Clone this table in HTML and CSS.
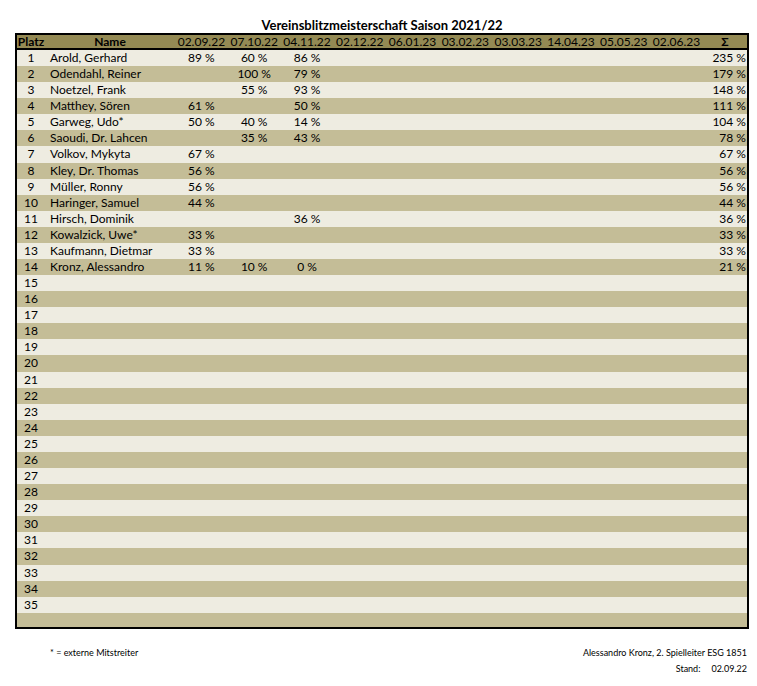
FILE: index.html
```html
<!DOCTYPE html>
<html lang="de">
<head>
<meta charset="utf-8">
<title>Vereinsblitzmeisterschaft Saison 2021/22</title>
<link rel="stylesheet" href="styles.css">
</head>
<body>
<div class="page">
  <h1 class="title">Vereinsblitzmeisterschaft Saison 2021/22</h1>
  <div class="sheet">
    <div class="row head">
      <div class="c-platz b">Platz</div>
      <div class="c-name b hc">Name</div>
      <div class="c-d">02.09.22</div>
      <div class="c-d">07.10.22</div>
      <div class="c-d">04.11.22</div>
      <div class="c-d">02.12.22</div>
      <div class="c-d">06.01.23</div>
      <div class="c-d">03.02.23</div>
      <div class="c-d">03.03.23</div>
      <div class="c-d">14.04.23</div>
      <div class="c-d">05.05.23</div>
      <div class="c-d">02.06.23</div>
      <div class="c-sum b hc">Σ</div>
    </div>
    <div class="row l"><div class="c-platz">1</div><div class="c-name">Arold, Gerhard</div><div class="c-d">89 %</div><div class="c-d">60 %</div><div class="c-d">86 %</div><div class="c-d"></div><div class="c-d"></div><div class="c-d"></div><div class="c-d"></div><div class="c-d"></div><div class="c-d"></div><div class="c-d"></div><div class="c-sum">235 %</div></div>
    <div class="row d"><div class="c-platz">2</div><div class="c-name">Odendahl, Reiner</div><div class="c-d"></div><div class="c-d">100 %</div><div class="c-d">79 %</div><div class="c-d"></div><div class="c-d"></div><div class="c-d"></div><div class="c-d"></div><div class="c-d"></div><div class="c-d"></div><div class="c-d"></div><div class="c-sum">179 %</div></div>
    <div class="row l"><div class="c-platz">3</div><div class="c-name">Noetzel, Frank</div><div class="c-d"></div><div class="c-d">55 %</div><div class="c-d">93 %</div><div class="c-d"></div><div class="c-d"></div><div class="c-d"></div><div class="c-d"></div><div class="c-d"></div><div class="c-d"></div><div class="c-d"></div><div class="c-sum">148 %</div></div>
    <div class="row d"><div class="c-platz">4</div><div class="c-name">Matthey, Sören</div><div class="c-d">61 %</div><div class="c-d"></div><div class="c-d">50 %</div><div class="c-d"></div><div class="c-d"></div><div class="c-d"></div><div class="c-d"></div><div class="c-d"></div><div class="c-d"></div><div class="c-d"></div><div class="c-sum">111 %</div></div>
    <div class="row l"><div class="c-platz">5</div><div class="c-name">Garweg, Udo*</div><div class="c-d">50 %</div><div class="c-d">40 %</div><div class="c-d">14 %</div><div class="c-d"></div><div class="c-d"></div><div class="c-d"></div><div class="c-d"></div><div class="c-d"></div><div class="c-d"></div><div class="c-d"></div><div class="c-sum">104 %</div></div>
    <div class="row d"><div class="c-platz">6</div><div class="c-name">Saoudi, Dr. Lahcen</div><div class="c-d"></div><div class="c-d">35 %</div><div class="c-d">43 %</div><div class="c-d"></div><div class="c-d"></div><div class="c-d"></div><div class="c-d"></div><div class="c-d"></div><div class="c-d"></div><div class="c-d"></div><div class="c-sum">78 %</div></div>
    <div class="row l"><div class="c-platz">7</div><div class="c-name">Volkov, Mykyta</div><div class="c-d">67 %</div><div class="c-d"></div><div class="c-d"></div><div class="c-d"></div><div class="c-d"></div><div class="c-d"></div><div class="c-d"></div><div class="c-d"></div><div class="c-d"></div><div class="c-d"></div><div class="c-sum">67 %</div></div>
    <div class="row d"><div class="c-platz">8</div><div class="c-name">Kley, Dr. Thomas</div><div class="c-d">56 %</div><div class="c-d"></div><div class="c-d"></div><div class="c-d"></div><div class="c-d"></div><div class="c-d"></div><div class="c-d"></div><div class="c-d"></div><div class="c-d"></div><div class="c-d"></div><div class="c-sum">56 %</div></div>
    <div class="row l"><div class="c-platz">9</div><div class="c-name">Müller, Ronny</div><div class="c-d">56 %</div><div class="c-d"></div><div class="c-d"></div><div class="c-d"></div><div class="c-d"></div><div class="c-d"></div><div class="c-d"></div><div class="c-d"></div><div class="c-d"></div><div class="c-d"></div><div class="c-sum">56 %</div></div>
    <div class="row d"><div class="c-platz">10</div><div class="c-name">Haringer, Samuel</div><div class="c-d">44 %</div><div class="c-d"></div><div class="c-d"></div><div class="c-d"></div><div class="c-d"></div><div class="c-d"></div><div class="c-d"></div><div class="c-d"></div><div class="c-d"></div><div class="c-d"></div><div class="c-sum">44 %</div></div>
    <div class="row l"><div class="c-platz">11</div><div class="c-name">Hirsch, Dominik</div><div class="c-d"></div><div class="c-d"></div><div class="c-d">36 %</div><div class="c-d"></div><div class="c-d"></div><div class="c-d"></div><div class="c-d"></div><div class="c-d"></div><div class="c-d"></div><div class="c-d"></div><div class="c-sum">36 %</div></div>
    <div class="row d"><div class="c-platz">12</div><div class="c-name">Kowalzick, Uwe*</div><div class="c-d">33 %</div><div class="c-d"></div><div class="c-d"></div><div class="c-d"></div><div class="c-d"></div><div class="c-d"></div><div class="c-d"></div><div class="c-d"></div><div class="c-d"></div><div class="c-d"></div><div class="c-sum">33 %</div></div>
    <div class="row l"><div class="c-platz">13</div><div class="c-name">Kaufmann, Dietmar</div><div class="c-d">33 %</div><div class="c-d"></div><div class="c-d"></div><div class="c-d"></div><div class="c-d"></div><div class="c-d"></div><div class="c-d"></div><div class="c-d"></div><div class="c-d"></div><div class="c-d"></div><div class="c-sum">33 %</div></div>
    <div class="row d"><div class="c-platz">14</div><div class="c-name">Kronz, Alessandro</div><div class="c-d">11 %</div><div class="c-d">10 %</div><div class="c-d">0 %</div><div class="c-d"></div><div class="c-d"></div><div class="c-d"></div><div class="c-d"></div><div class="c-d"></div><div class="c-d"></div><div class="c-d"></div><div class="c-sum">21 %</div></div>
    <div class="row l"><div class="c-platz">15</div></div>
    <div class="row d"><div class="c-platz">16</div></div>
    <div class="row l"><div class="c-platz">17</div></div>
    <div class="row d"><div class="c-platz">18</div></div>
    <div class="row l"><div class="c-platz">19</div></div>
    <div class="row d"><div class="c-platz">20</div></div>
    <div class="row l"><div class="c-platz">21</div></div>
    <div class="row d"><div class="c-platz">22</div></div>
    <div class="row l"><div class="c-platz">23</div></div>
    <div class="row d"><div class="c-platz">24</div></div>
    <div class="row l"><div class="c-platz">25</div></div>
    <div class="row d"><div class="c-platz">26</div></div>
    <div class="row l"><div class="c-platz">27</div></div>
    <div class="row d"><div class="c-platz">28</div></div>
    <div class="row l"><div class="c-platz">29</div></div>
    <div class="row d"><div class="c-platz">30</div></div>
    <div class="row l"><div class="c-platz">31</div></div>
    <div class="row d"><div class="c-platz">32</div></div>
    <div class="row l"><div class="c-platz">33</div></div>
    <div class="row d"><div class="c-platz">34</div></div>
    <div class="row l"><div class="c-platz">35</div></div>
    <div class="row d last"></div>
  </div>
  <div class="footer">
    <div class="note">* = externe Mitstreiter</div>
    <div class="sign">
      <div>Alessandro Kronz, 2. Spielleiter ESG 1851</div>
      <div><span class="stand">Stand:</span><span>02.09.22</span></div>
    </div>
  </div>
</div>
</body>
</html>
```
FILE: styles.css
```css
* { box-sizing: border-box; }
html, body { margin: 0; padding: 0; background: #fff; }
body {
  font-family: Lato, "Open Sans", "Liberation Sans", sans-serif;
  color: #000;
}
.page {
  width: 749px;
  padding: 17px 0 0 15px;
}
.title {
  margin: 0;
  font-size: 13px;
  line-height: 16px;
  font-weight: 700;
  text-align: center;
}
.sheet {
  border: 2px solid #000;
  width: 734px;
}
.row {
  display: grid;
  grid-template-columns: 28px 130px repeat(10, 52.8px) 44px;
  height: 16.09px;
  font-size: 12px;
  line-height: 16px;
  white-space: nowrap;
}
.row.head {
  height: 15px;
  line-height: 13px;
  background: #948a54;
  border-bottom: 2px solid #000;
}
.row.l { background: #eeece1; }
.row.d { background: #c4bd97; }
.row.last { height: 14px; }
.b { font-weight: 700; }
.c-platz { text-align: center; }
.c-name { padding-left: 5px; }
.c-name.hc { padding-left: 0; text-align: center; }
.c-d { text-align: center; }
.c-sum { text-align: right; padding-right: 1px; }
.c-sum.hc { text-align: center; padding-right: 0; }
.footer {
  display: flex;
  justify-content: space-between;
  align-items: flex-start;
  padding: 16px 2px 0 35px;
  font-size: 9px;
  line-height: 16px;
}
.sign { text-align: right; }
.stand { margin-right: 11px; }
```
